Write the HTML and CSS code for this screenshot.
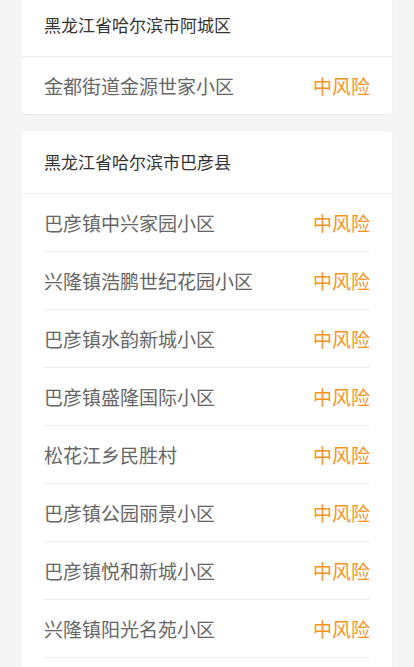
FILE: index.html
```html
<!DOCTYPE html>
<html lang="zh-CN">
<head>
    <meta charset="UTF-8">
    <meta name="viewport" content="width=device-width, initial-scale=1.0">
    <title>风险地区</title>
    <link rel="stylesheet" href="styles.css">
</head>
<body>
    <div class="list">
        <div class="area-card">
            <div class="area-title">黑龙江省哈尔滨市阿城区</div>
            <ul class="area-rows">
                <li><span class="place">金都街道金源世家小区</span><span class="risk">中风险</span></li>
            </ul>
        </div>

        <div class="area-card">
            <div class="area-title">黑龙江省哈尔滨市巴彦县</div>
            <ul class="area-rows more">
                <li><span class="place">巴彦镇中兴家园小区</span><span class="risk">中风险</span></li>
                <li><span class="place">兴隆镇浩鹏世纪花园小区</span><span class="risk">中风险</span></li>
                <li><span class="place">巴彦镇水韵新城小区</span><span class="risk">中风险</span></li>
                <li><span class="place">巴彦镇盛隆国际小区</span><span class="risk">中风险</span></li>
                <li><span class="place">松花江乡民胜村</span><span class="risk">中风险</span></li>
                <li><span class="place">巴彦镇公园丽景小区</span><span class="risk">中风险</span></li>
                <li><span class="place">巴彦镇悦和新城小区</span><span class="risk">中风险</span></li>
                <li><span class="place">兴隆镇阳光名苑小区</span><span class="risk">中风险</span></li>
            </ul>
        </div>
    </div>
</body>
</html>
```

FILE: styles.css
```css
body {
    margin: 0;
    background-color: #f5f5f5;
    font-family: "Noto Sans CJK SC", "Noto Sans", sans-serif;
    overflow: hidden;
}
.list {
    display: flex;
    flex-direction: column;
    gap: 17px;
    padding: 0 22px 40px;
    margin-top: -6px;
}
.area-card {
    background-color: white;
    border-radius: 4px;
    box-shadow: 0 1px 2px rgba(0, 0, 0, 0.04);
}
.area-title {
    height: 62px;
    line-height: 62px;
    padding: 0 22px;
    font-size: 17px;
    color: #333;
    border-bottom: 1px solid #eeeeee;
}
.area-rows {
    list-style: none;
    margin: 0;
    padding: 0 22px;
}
.area-rows li {
    display: flex;
    justify-content: space-between;
    align-items: center;
    height: 57px;
    border-bottom: 1px solid #eeeeee;
    font-size: 19px;
}
.area-rows li:last-child {
    border-bottom: none;
}
/* list continues below the fold */
.area-rows.more {
    padding-bottom: 20px;
}
.area-rows.more li:last-child {
    border-bottom: 1px solid #eeeeee;
}
.place {
    color: #666;
}
.risk {
    color: #f7941d;
}
```
